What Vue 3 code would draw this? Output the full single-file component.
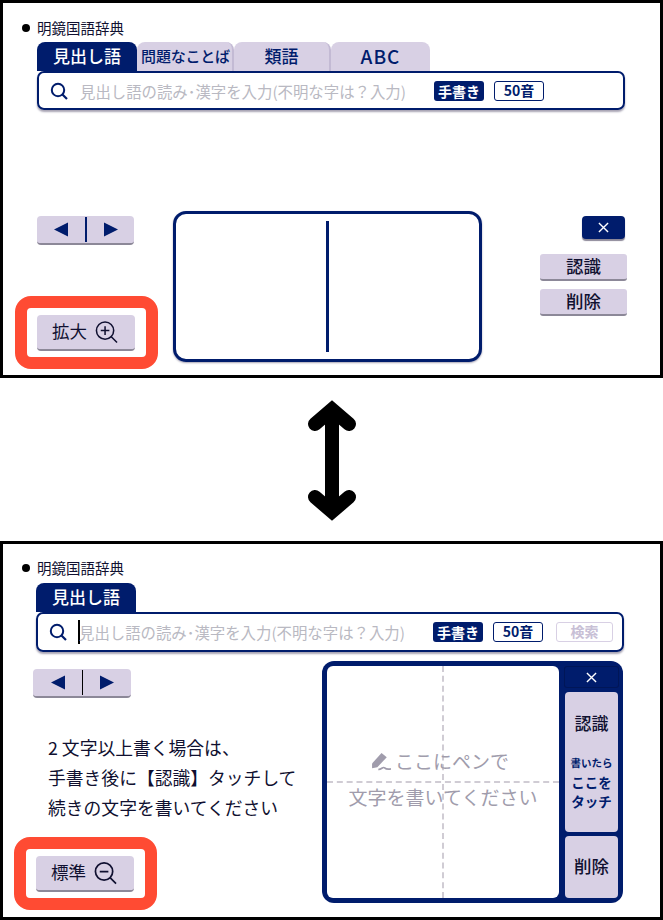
<script setup>
const topTabs = ['問題なことば', '類語', 'ABC']
</script>

<template>
  <div class="page">
    <section class="panel top">
      <div class="dict"><i class="dot"></i>明鏡国語辞典</div>
      <div class="tabs">
        <div class="tab active">見出し語</div>
        <div v-for="t in topTabs" :key="t" class="tab" :class="{ narrow: t === topTabs[0], latin: t === 'ABC' }">{{ t }}</div>
      </div>
      <div class="search">
        <svg class="sicon" viewBox="0 0 18 18"><circle cx="8" cy="8" r="6.2" fill="none" stroke="#001c6c" stroke-width="2"/><path d="M12.5 12.5L17 17" stroke="#001c6c" stroke-width="2.2"/></svg>
        <span class="ph">見出し語の読み･漢字を入力(不明な字は？入力)</span>
        <span class="mini solid">手書き</span>
        <span class="mini outline">50音</span>
      </div>
      <div class="work">
        <div class="left">
          <div class="nav">
            <svg viewBox="0 0 14 14" class="tri"><path d="M14 0V14L0 7Z"/></svg>
            <i class="sep"></i>
            <svg viewBox="0 0 14 14" class="tri"><path d="M0 0V14L14 7Z"/></svg>
          </div>
          <div class="red">
            <div class="zoom">拡大
              <svg class="lens" viewBox="0 0 24 24"><circle cx="10.5" cy="10.5" r="9" fill="none" stroke="#101030" stroke-width="1.6"/><path d="M17 17L23 23M6 10.5H15M10.5 6V15" stroke="#101030" stroke-width="1.6"/></svg>
            </div>
          </div>
        </div>
        <div class="canvas"><i class="bar"></i></div>
        <div class="right">
          <div class="x"><svg viewBox="0 0 12 12" class="xi"><path d="M1 1L11 11M11 1L1 11" stroke="#fff" stroke-width="1.5"/></svg></div>
          <div class="act first">認識</div>
          <div class="act">削除</div>
        </div>
      </div>
    </section>

    <div class="between">
      <svg width="60" height="131" viewBox="0 0 60 131"><path d="M30 16V115M13 29L30 14.500L47 29M13 102L30 116.500L47 102" fill="none" stroke="#000" stroke-width="14" stroke-linecap="round" stroke-linejoin="miter"/></svg>
    </div>

    <section class="panel bottom">
      <div class="dict"><i class="dot"></i>明鏡国語辞典</div>
      <div class="tabs">
        <div class="tab active">見出し語</div>
      </div>
      <div class="search">
        <svg class="sicon" viewBox="0 0 18 18"><circle cx="8" cy="8" r="6.2" fill="none" stroke="#001c6c" stroke-width="2"/><path d="M12.5 12.5L17 17" stroke="#001c6c" stroke-width="2.2"/></svg>
        <i class="cursor"></i>
        <span class="ph">見出し語の読み･漢字を入力(不明な字は？入力)</span>
        <span class="mini solid">手書き</span>
        <span class="mini outline">50音</span>
        <span class="mini off">検索</span>
      </div>
      <div class="work2">
        <div class="left2">
          <div class="nav">
            <svg viewBox="0 0 14 14" class="tri"><path d="M14 0V14L0 7Z"/></svg>
            <i class="sep thin"></i>
            <svg viewBox="0 0 14 14" class="tri"><path d="M0 0V14L14 7Z"/></svg>
          </div>
          <p class="note">2 文字以上書く場合は、<br>手書き後に【認識】タッチして<br>続きの文字を書いてください</p>
          <div class="red">
            <div class="zoom">標準
              <svg class="lens" viewBox="0 0 24 24"><circle cx="10.5" cy="10.5" r="9" fill="none" stroke="#101030" stroke-width="1.8"/><path d="M17 17L23 23M6 10.5H15" stroke="#101030" stroke-width="1.8"/></svg>
            </div>
          </div>
        </div>
        <div class="pad">
          <div class="paper">
            <i class="dv"></i><i class="dh"></i>
            <div class="hint">
              <div class="h1">
                <svg class="pen" viewBox="0 0 20 18"><path d="M1 11L10 1L15 5L6 14.500L1 15.500Z" fill="#a09cac"/><path d="M7 16.500C10 17 11 13.500 13 15C14 16 16 16.500 19 16" fill="none" stroke="#a09cac" stroke-width="1.6"/></svg>ここにペンで
              </div>
              <div class="h2">文字を書いてください</div>
            </div>
          </div>
          <div class="side">
            <div class="sx"><svg viewBox="0 0 12 12" class="xi"><path d="M1 1L11 11M11 1L1 11" stroke="#fff" stroke-width="1.5"/></svg></div>
            <div class="rec">
              <span class="rec-t">認識</span>
              <span class="rec-s">書いたら</span>
              <span class="rec-b">ここを<br>タッチ</span>
            </div>
            <div class="del">削除</div>
          </div>
        </div>
      </div>
    </section>
  </div>
</template>

<style>
html, body { margin: 0; background: #fff; }
</style>

<style scoped>
.page {
  width: 663px;
  height: 920px;
  display: flex;
  flex-direction: column;
  font-family: "Noto Sans CJK JP", "Noto Sans", sans-serif;
  color: #101030;
  background: #fff;
  overflow: hidden;
}
.panel {
  box-sizing: border-box;
  border: 3px solid #000;
  width: 663px;
  position: relative;
}
.panel.top { height: 378px; }
.panel.bottom { height: 379px; }
.between { height: 163px; display: flex; align-items: center; justify-content: center; }
.between svg { margin-left: 1px; margin-top: 1px; }

.dict {
  height: 16px;
  margin: 17px 0 0 19px;
  display: flex;
  align-items: center;
  font-size: 14.5px;
  line-height: 16px;
}
.bottom .dict { margin-top: 16px; }
.dot { width: 8px; height: 8px; border-radius: 50%; background: #000; margin-right: 7px; }

.tabs { display: flex; margin: 6px 0 0 34px; height: 29px; }
.bottom .tabs { margin-left: 33px; margin-top: 7px; }
.tab {
  box-sizing: border-box;
  width: 97px;
  background: #d8d0e4;
  border-radius: 8px 8px 0 0;
  border-right: 2px solid #c3bad4;
  color: #001c6c;
  text-align: center;
  font-size: 17px;
  line-height: 27px;
  font-weight: 500;
}
.tab.narrow { font-size: 15px; white-space: nowrap; letter-spacing: -0.2px; padding-left: 2px; }
.tab.latin { font-size: 19px; letter-spacing: 1px; width: 99px; border-right: 0; }
.tab.active { width: 100px; background: #001c6c; color: #fff; border-right: 0; }

.search {
  box-sizing: border-box;
  margin-left: 34px;
  width: 588px;
  height: 39px;
  border: 2.5px solid #001c6c;
  border-radius: 7px;
  box-shadow: 0 2px 2px #a8a4b4;
  display: flex;
  align-items: center;
  padding-left: 11px;
}
.bottom .search { margin-left: 33px; height: 40px; }
.sicon { width: 18px; height: 18px; flex: none; margin-right: 12px; }
.ph { width: 354px; font-size: 15.4px; color: #b9b9c2; white-space: nowrap; flex: none; }
.bottom .ph { width: 354px; margin-left: -1px; }
.cursor { width: 2px; height: 24px; background: #000; flex: none; margin-left: -1px; }
.mini {
  box-sizing: border-box;
  flex: none;
  height: 20px;
  width: 50px;
  border-radius: 3px;
  text-align: center;
  font-size: 14px;
  line-height: 18px;
  font-weight: 700;
}
.mini.solid { background: #001c6c; color: #fff; line-height: 20px; }
.mini.outline { border: 1.5px solid #001c6c; color: #001c6c; margin-left: 10px; line-height: 16px; }
.mini.off { border: 1.5px solid #d8d0e4; color: #c8c0d6; margin-left: 13px; width: 57px; line-height: 16px; }

.work { display: flex; margin-top: 101px; }
.left { width: 170px; display: flex; flex-direction: column; }
.nav {
  box-sizing: border-box;
  width: 97px;
  height: 29px;
  margin: 5px 0 0 34px;
  background: #d8d0e4;
  border-radius: 4px;
  border-bottom: 2px solid #8c8898;
  display: flex;
  align-items: center;
  justify-content: center;
  gap: 17px;
}
.tri { width: 14px; height: 15px; fill: #001c6c; }
.sep { width: 2px; height: 25px; background: #001c6c; }
.sep.thin { width: 1px; background: #000; }
.red {
  box-sizing: border-box;
  width: 143px;
  height: 73px;
  margin: 51px 0 0 12px;
  border: 12px solid #ff4b33;
  border-radius: 16px;
  padding: 7px 0 0 10px;
  background: #fff;
}
.zoom {
  box-sizing: border-box;
  width: 98px;
  height: 36px;
  margin-top: 0;
  background: #d8d0e4;
  border-radius: 4px;
  border-bottom: 2px solid #8c8898;
  display: flex;
  align-items: center;
  padding: 0 0 3px 15px;
  font-size: 17.5px;
  gap: 8px;
}
.lens { width: 23px; height: 24px; margin-top: 2px; }
.canvas {
  box-sizing: border-box;
  width: 309px;
  height: 151px;
  border: 3.5px solid #001c6c;
  border-radius: 13px;
  box-shadow: 0 1px 2px #a8a4b4;
  display: flex;
  justify-content: center;
  align-items: center;
}
.bar { width: 3px; height: 131px; background: #001c6c; }
.right {
  width: 145px;
  display: flex;
  flex-direction: column;
  align-items: flex-end;
  padding-top: 5px;
}
.x {
  width: 43px;
  height: 23px;
  background: #001c6c;
  border-radius: 4px;
  box-shadow: 0 2px 1px #8c8898;
  margin-right: 2px;
  display: flex;
  align-items: center;
  justify-content: center;
}
.xi { width: 11px; height: 11px; }
.act {
  box-sizing: border-box;
  width: 87px;
  height: 27px;
  margin-top: 8px;
  background: #d8d0e4;
  border-radius: 3px;
  border-bottom: 2px solid #8c8898;
  text-align: center;
  font-size: 17.5px;
  font-weight: 500;
  line-height: 24px;
}
.act.first { margin-top: 15px; }

.work2 { display: flex; margin-top: 9px; }
.left2 { width: 319px; position: relative; display: flex; flex-direction: column; }
.left2 .nav { margin: 8px 0 0 30px; width: 98px; }
.note {
  margin: 34px 0 0 45px;
  font-size: 17.8px;
  line-height: 30px;
  white-space: nowrap;
  height: 90px;
}
.left2 .red { margin: 15px 0 0 11px; }
.pad {
  box-sizing: border-box;
  width: 301px;
  height: 242px;
  background: #001c6c;
  border-radius: 12px;
  padding: 5px 4px 5px 5px;
  display: flex;
  gap: 5px;
}
.paper {
  width: 232px;
  height: 232px;
  background: #fff;
  border-radius: 6px;
  position: relative;
  display: flex;
  align-items: center;
  justify-content: center;
}
.dv { position: absolute; left: 115px; top: 0; bottom: 0; border-left: 2px dashed #d0ccd4; }
.dh { position: absolute; top: 115px; left: 0; right: 0; border-top: 2px dashed #d0ccd4; }
.hint { position: relative; color: #a09cac; font-size: 19px; text-align: center; line-height: 36px; margin-top: -6px; }
.h1 { display: flex; justify-content: center; align-items: center; margin-left: -6px; }
.pen { width: 21px; height: 19px; margin-right: 3px; }
.side { flex: 1; display: flex; flex-direction: column; }
.sx {
  height: 22px;
  display: flex;
  align-items: center;
  justify-content: center;
  border-radius: 3px;
  box-shadow: inset 0 0 0 1px #001658;
}
.rec {
  margin: 4px 1px 0;
  height: 140px;
  background: #d8d0e4;
  border-radius: 4px;
  display: flex;
  flex-direction: column;
  align-items: center;
  color: #101030;
}
.rec-t { font-size: 17px; font-weight: 500; margin-top: 20px; line-height: 22px; }
.rec-s { font-size: 10.5px; color: #001c6c; margin-top: 21px; line-height: 16px; font-weight: 700; white-space: nowrap; }
.rec-b { font-size: 13.5px; color: #001c6c; margin-top: 2px; line-height: 19px; text-align: center; font-weight: 700; }
.del {
  margin: 4px 1px 0;
  height: 62px;
  background: #d8d0e4;
  border-radius: 4px;
  font-size: 17.5px;
  font-weight: 500;
  line-height: 60px;
  text-align: center;
}
</style>
